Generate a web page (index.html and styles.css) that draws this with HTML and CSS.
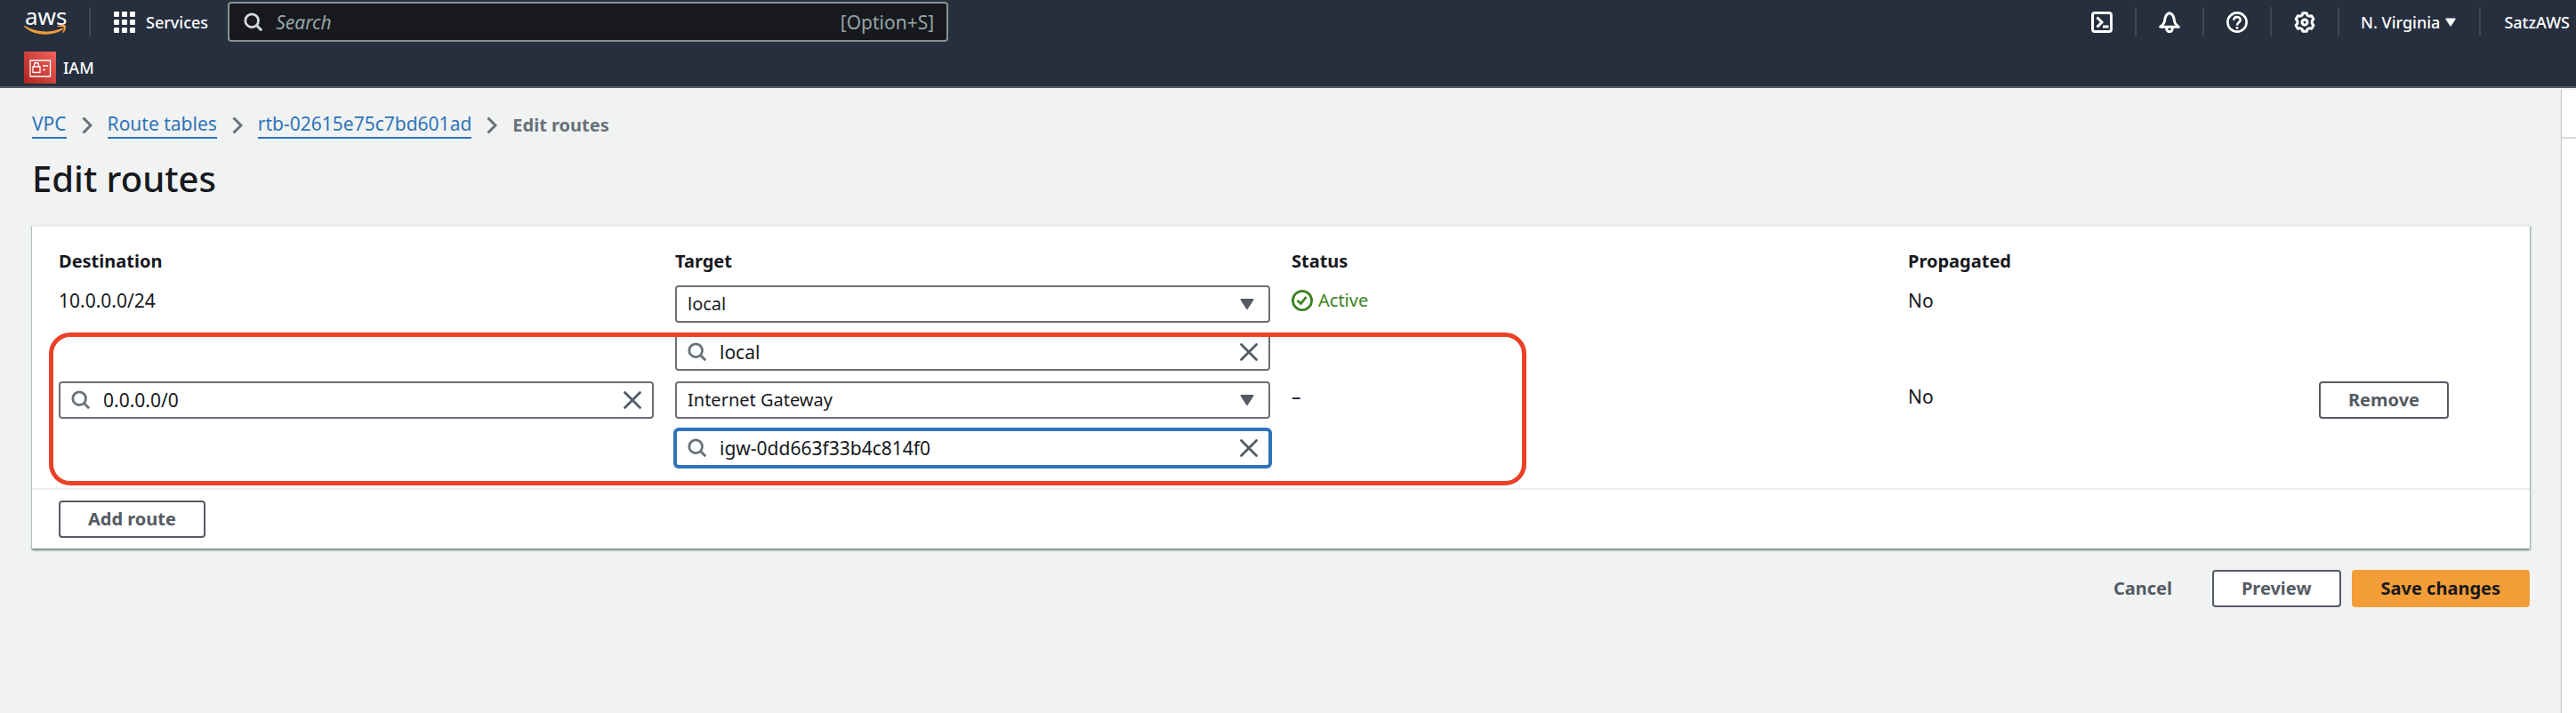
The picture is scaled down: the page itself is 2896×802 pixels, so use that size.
FILE: index.html
```html
<!DOCTYPE html>
<html lang="en">
<head>
<meta charset="utf-8">
<title>Edit routes</title>
<link rel="stylesheet" href="styles.css">
</head>
<body>
<svg class="defs" aria-hidden="true">
  <symbol id="search" viewBox="0 0 24 24"><circle cx="10" cy="10" r="8" fill="none" stroke="currentColor" stroke-width="3"/><path d="M15.500 15.500 22 22" fill="none" stroke="currentColor" stroke-width="3.200"/></symbol>
  <symbol id="close" viewBox="0 0 20 20"><path d="M1.500 1.500 18.500 18.500M18.500 1.500 1.500 18.500" fill="none" stroke="currentColor" stroke-width="2.800" stroke-linecap="round"/></symbol>
  <symbol id="caret" viewBox="0 0 16 12"><path d="M1.500 1h13L8 11z" fill="currentColor" stroke="currentColor" stroke-width="2" stroke-linejoin="round"/></symbol>
  <symbol id="chevron" viewBox="0 0 12 20"><path d="M1.500 1.500 10 10 1.500 18.500" fill="none" stroke="currentColor" stroke-width="3"/></symbol>
</svg>

<header class="header">
  <div class="topbar">
    <a class="logo" href="#" aria-label="aws home">
      <span class="logo-text">aws</span>
      <svg class="logo-smile" viewBox="0 0 48 11"><path d="M.5.8C13 8.600 30 9.500 42.500 3.800c1.200-.4 2 .8 1 1.500C33 12.500 12 13.500.3 2 0 1.500.1.700.5.8z" fill="#f29d38"/><path d="M37.500 1.300C40 .2 44.500-.3 46.500.5c1.200.8.2 6.500-2.500 8.500-.8.4-.8-.2-.5-.9C44.500 5.500 45 3.500 44.600 2.900 43.700 2 40.500 2 38 2.200c-.7 0-1-.5-.5-.9z" fill="#f29d38"/></svg>
    </a>
    <button class="services" type="button">
      <svg class="icon" viewBox="0 0 24 24" fill="#fff"><rect width="6" height="6" rx="1"/><rect x="9" width="6" height="6" rx="1"/><rect x="18" width="6" height="6" rx="1"/><rect y="9" width="6" height="6" rx="1"/><rect x="9" y="9" width="6" height="6" rx="1"/><rect x="18" y="9" width="6" height="6" rx="1"/><rect y="18" width="6" height="6" rx="1"/><rect x="9" y="18" width="6" height="6" rx="1"/><rect x="18" y="18" width="6" height="6" rx="1"/></svg>
      Services
    </button>
    <label class="search">
      <svg class="search-icon"><use href="#search"/></svg>
      <input type="text" placeholder="Search" aria-label="Search">
      <span class="hint">[Option+S]</span>
    </label>
    <nav class="tools">
      <button type="button" class="tool" aria-label="CloudShell"><svg class="icon" viewBox="0 0 24 24" fill="none" stroke="#fff" stroke-width="3"><rect x="1.500" y="1.500" width="21" height="21" rx="2.500"/><path d="M6.500 6.500 12 12 6.500 17.500M13 17h6.500"/></svg></button>
      <button type="button" class="tool" aria-label="Notifications"><svg class="icon" viewBox="0 0 24 24" fill="none" stroke="#fff" stroke-width="3" stroke-linejoin="round"><path d="M12 1.700C8.200 3 7 5.500 6.700 9.500c-.2 3-2 5.500-5 7.700h20.600c-3-2.200-4.800-4.700-5-7.700C17 5.500 15.800 3 12 1.700z"/><path d="M8.800 17.500V19.500a3.200 3.200 0 0 0 6.400 0V17.500"/></svg></button>
      <button type="button" class="tool" aria-label="Help"><svg class="icon" viewBox="0 0 24 24" fill="none" stroke="#fff" stroke-width="2.600"><circle cx="12" cy="12" r="10.600"/><path d="M8.300 9.800c0-5 7.400-4.700 7.400-.4 0 2.800-3.700 2.700-3.700 6"/><path d="M12 17v2.700"/></svg></button>
      <button type="button" class="tool" aria-label="Settings"><svg class="icon" viewBox="0 0 24 24" fill="none" stroke="#fff" stroke-width="3" stroke-linejoin="round"><path d="M9.800 1.700h4.400l.8 2.500 2 1.100 2.700-.6 2.200 3.800-1.700 2.100v2.800l1.700 2.100-2.200 3.800-2.700-.6-2 1.100-.8 2.500H9.800L9 19.800l-2-1.100-2.700.6-2.200-3.800 1.700-2.100v-2.800L2.100 8.500l2.200-3.800 2.700.6 2-1.100z"/><circle cx="12" cy="12" r="3"/></svg></button>
      <button type="button" class="tool tool-text">N. Virginia <svg class="mini-caret"><use href="#caret"/></svg></button>
      <button type="button" class="tool account">SatzAWS</button>
    </nav>
  </div>
  <a class="favorite" href="#">
    <svg class="iam" viewBox="0 0 36 36"><defs><linearGradient id="red" x1="0" y1="1" x2="1" y2="0"><stop offset="0" stop-color="#b0241f"/><stop offset="1" stop-color="#f0625a"/></linearGradient></defs><path d="M0 0h36v36H0z" fill="url(#red)"/><g fill="none" stroke="#fff" stroke-width="1.300"><path d="M7 10h22.500v18H7zM10 17h8v6.500h-8zM11.500 17v-2a2.500 2.500 0 0 1 5 0v2M21 16h6M21 20.500h3M25.500 16h1.500"/></g></svg>
    IAM
  </a>
</header>

<div class="page">
  <main class="main">
    <nav class="breadcrumbs" aria-label="Breadcrumbs">
      <a href="#">VPC</a><svg class="chevron"><use href="#chevron"/></svg>
      <a href="#">Route tables</a><svg class="chevron"><use href="#chevron"/></svg>
      <a href="#">rtb-02615e75c7bd601ad</a><svg class="chevron"><use href="#chevron"/></svg>
      <span class="current">Edit routes</span>
    </nav>
    <h1 class="title">Edit routes</h1>

    <section class="panel">
      <table class="routes">
        <thead>
          <tr class="row"><th>Destination</th><th>Target</th><th>Status</th><th>Propagated</th></tr>
        </thead>
        <tbody>
          <tr class="row">
            <td class="text">10.0.0.0/24</td>
            <td class="stack">
              <label class="field"><select aria-label="Target type"><option>local</option></select><svg class="caret"><use href="#caret"/></svg></label>
              <div class="field with-icon"><svg class="field-search"><use href="#search"/></svg><input type="text" value="local" aria-label="Target"><button type="button" class="clear" aria-label="Clear"><svg><use href="#close"/></svg></button></div>
            </td>
            <td class="text"><span class="active"><svg class="icon" viewBox="0 0 24 24" fill="none" stroke="currentColor" stroke-width="2.800"><circle cx="12" cy="12" r="10.600"/><path d="M6.500 12 10.500 15.500 16.500 8"/></svg>Active</span></td>
            <td class="text">No</td>
          </tr>
          <tr class="row">
            <td><div class="field with-icon"><svg class="field-search"><use href="#search"/></svg><input type="text" value="0.0.0.0/0" aria-label="Destination"><button type="button" class="clear" aria-label="Clear"><svg><use href="#close"/></svg></button></div></td>
            <td class="stack">
              <label class="field"><select aria-label="Target type"><option>Internet Gateway</option></select><svg class="caret"><use href="#caret"/></svg></label>
              <div class="field with-icon focused"><svg class="field-search"><use href="#search"/></svg><input type="text" value="igw-0dd663f33b4c814f0" aria-label="Target"><button type="button" class="clear" aria-label="Clear"><svg><use href="#close"/></svg></button></div>
            </td>
            <td class="text">–</td>
            <td class="text">No</td>
            <td><button type="button" class="button">Remove</button></td>
          </tr>
        </tbody>
      </table>
      <div class="panel-footer"><button type="button" class="button">Add route</button></div>
      <div class="highlight"></div>
    </section>

    <div class="actions">
      <button type="button" class="button link">Cancel</button>
      <button type="button" class="button">Preview</button>
      <button type="button" class="button primary">Save changes</button>
    </div>
  </main>
  <aside class="side"></aside>
</div>
</body>
</html>
```

FILE: styles.css
```css
* { box-sizing: border-box; }
body {
  margin: 0;
  min-height: 100vh;
  display: flex;
  flex-direction: column;
  background: #f1f3f3;
  color: #17191e;
  font: 20px/30px "Noto Sans", "Open Sans", sans-serif;
}
button, input, select { font: inherit; color: inherit; }
button { cursor: pointer; }
svg { display: block; flex: none; }
.defs { position: absolute; width: 0; height: 0; }
.icon { width: 24px; height: 24px; }

.header {
  background: #262f3e;
  border-bottom: 2px solid #545b67;
  color: #fff;
  font-size: 18px;
  font-weight: 500;
  line-height: 24px;
  padding: 2px 0 3px;
}
.topbar { display: flex; align-items: center; height: 45px; margin-bottom: 11px; }
.logo {
  display: flex;
  flex-direction: column;
  width: 102px;
  height: 33px;
  padding-left: 27px;
  border-right: 2px solid #414750;
  color: #fff;
  text-decoration: none;
}
.logo-text { font: 400 26px/20px "Noto Sans", sans-serif; padding-left: 1px; }
.logo-smile { width: 48px; height: 11px; }
.services {
  display: flex;
  align-items: center;
  gap: 12px;
  padding: 0 22px 0 26px;
  border: 0;
  background: none;
}
.search {
  display: flex;
  align-items: center;
  flex: 0 1 810px;
  height: 45px;
  padding: 0 14px 0 16px;
  border: 2px solid #879191;
  border-radius: 4px;
  background: #17191e;
  color: #95a5a6;
  font-size: 21px;
  font-weight: 400;
}
.search-icon { width: 22px; height: 22px; color: #dadddd; margin-right: 14px; }
.search input { flex: 1; min-width: 0; padding: 0; border: 0; outline: 0; background: none; }
.search input::placeholder { color: #95a5a6; font-style: italic; opacity: 1; }
.tools { display: flex; margin-left: auto; }
.tool {
  display: flex;
  align-items: center;
  justify-content: center;
  width: 76px;
  height: 33px;
  padding: 0;
  border: 0;
  border-right: 2px solid #414750;
  background: none;
}
.tool-text { width: auto; gap: 6px; padding: 0 26px 0 24px; }
.account { width: auto; padding: 0 7px 0 26px; border: 0; }
.mini-caret { width: 12px; height: 10px; }
.favorite { display: flex; width: fit-content; align-items: center; gap: 8px; padding-left: 27px; color: #fff; text-decoration: none; }
.iam { width: 36px; height: 36px; }

.page { display: flex; flex: 1; }
.main { flex: 1; min-width: 0; padding: 26px 36px 36px; }
.side {
  width: 16px;
  margin-top: 2px;
  background: linear-gradient(#d5dbdb, #d5dbdb) 0 53px / 100% 2px no-repeat #fff;
  box-shadow: -1px 0 1px #c4caca;
}
.breadcrumbs { display: flex; align-items: center; gap: 17px; font-size: 21px; }
.breadcrumbs a { color: #2e73b8; text-decoration: none; border-bottom: 2px solid #2e73b8; line-height: 29px; }
.breadcrumbs .current { color: #687078; font-size: 20px; font-weight: 700; }
.chevron { width: 12px; height: 20px; color: #687078; }
.title { margin: 17px 0 24px; font-size: 40px; line-height: 56px; font-weight: 500; }

.panel {
  position: relative;
  background: #fff;
  border-top: 2px solid #eaeded;
  box-shadow: 0 2px 2px #7d888a, 1px 1px 2px #aab7b8, -1px 1px 1px #d5dbdb;
}
.routes { display: block; padding: 24px 30px; }
.routes thead { display: block; }
.routes tbody { display: grid; gap: 12px; }
.row { display: grid; grid-template-columns: repeat(12, 1fr); column-gap: 24px; align-items: start; }
.row > * { grid-column: span 3; padding: 0; min-width: 0; }
.row > :nth-child(4) { grid-column: span 2; }
.row > :nth-child(5) { grid-column: span 1; }
.row th { text-align: left; padding-bottom: 12px; }
.text { font-size: 21px; line-height: 34px; }
.stack { display: grid; gap: 12px; }
.field {
  position: relative;
  display: flex;
  align-items: center;
  height: 42px;
  border: 2px solid #687078;
  border-radius: 4px;
  background: #fff;
}
.field select {
  appearance: none;
  width: 100%;
  height: 38px;
  padding: 0 48px 0 12px;
  border: 0;
  outline: 0;
  background: none;
}
.field .caret { position: absolute; right: 16px; width: 16px; height: 12px; color: #545b64; pointer-events: none; }
.with-icon { gap: 14px; padding: 0 12px; font-size: 21px; }
.field-search { width: 22px; height: 22px; color: #687078; }
.with-icon input { flex: 1; min-width: 0; padding: 0; border: 0; outline: 0; background: none; }
.clear { padding: 0; border: 0; background: none; color: #545b64; }
.clear svg { width: 20px; height: 20px; }
.focused { border-color: #2e73b8; box-shadow: 0 0 0 2px #2e73b8; }
.active { display: flex; align-items: center; gap: 6px; color: #3b8220; font-size: 20px; }
.button {
  height: 42px;
  padding: 0 31px;
  border: 2px solid #545b64;
  border-radius: 4px;
  background: #fff;
  color: #545b64;
  font-weight: 700;
  white-space: nowrap;
}
.panel-footer { padding: 12px 30px; border-top: 2px solid #eaeded; }
.highlight {
  position: absolute;
  left: 19px;
  top: 119px;
  width: calc(60% - 24px);
  height: 172px;
  border: 5px solid #eb4127;
  border-radius: 24px;
  pointer-events: none;
}
.actions { display: flex; justify-content: flex-end; gap: 12px; margin-top: 24px; }
.button.link { background: none; border-color: transparent; }
.button.primary { background: #f29d38; border-color: #f29d38; color: #17191e; }
```
